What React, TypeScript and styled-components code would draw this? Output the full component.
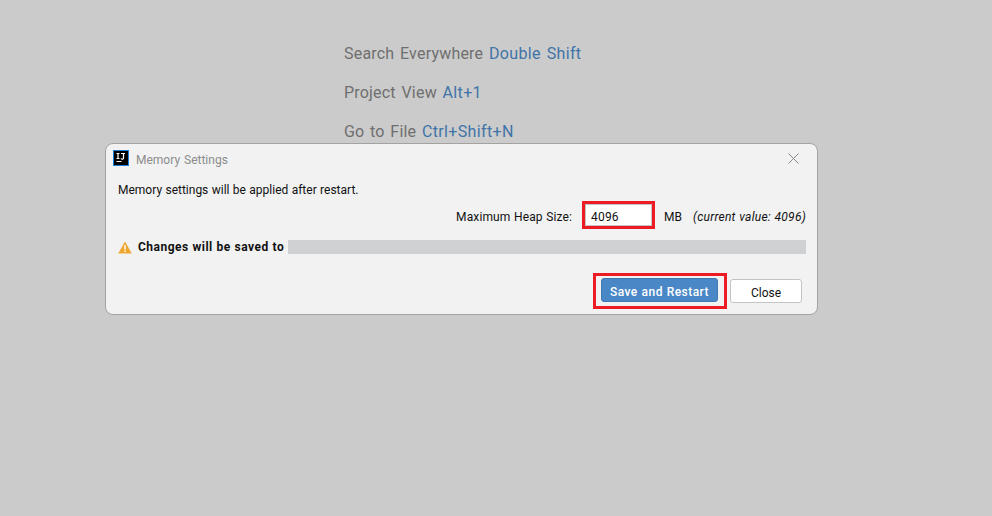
import React from "react";
import styled, { createGlobalStyle } from "styled-components";

const Global = createGlobalStyle`
  html, body { margin: 0; padding: 0; height: 100%; }
  body { background: #cbcbcb; font-family: Roboto, "Noto Sans", sans-serif; }
  #root { height: 100%; }
`;

const Page = styled.div`
  position: relative;
  width: 992px;
  height: 516px;
  overflow: hidden;
  background: #cbcbcb;
`;

const Hints = styled.div`
  display: flex;
  flex-direction: column;
  gap: 17px;
  padding: 43px 0 0 344px;
`;

const Hint = styled.div`
  font-size: 16px;
  line-height: 22px;
  color: #6f6f6f;
  white-space: nowrap;
  word-spacing: 1.5px;
  letter-spacing: 0.2px;
`;

const Key = styled.span`
  color: #3f74a8;
  letter-spacing: 0.35px;
`;

const Dialog = styled.div`
  position: absolute;
  left: 105px;
  top: 143px;
  width: 711px;
  height: 170px;
  background: #f2f2f2;
  border: 1px solid #a3a3a3;
  border-radius: 8px;
  color: #111;
  font-size: 12px;
  word-spacing: 0.4px;
  display: flex;
  flex-direction: column;
`;

const TitleBar = styled.div`
  display: flex;
  align-items: center;
  height: 30px;
  padding: 0 18px 2px 7px;
  box-sizing: border-box;
  gap: 7px;
`;

const Title = styled.div`
  flex: 1;
  color: #8c8c8c;
  font-size: 12px;
  word-spacing: 1px;
  padding-top: 4px;
`;

const Body = styled.div`
  display: flex;
  flex-direction: column;
  padding: 8px 11px 0 12px;
`;

const Message = styled.div`
  line-height: 17px;
`;

const HeapRow = styled.div`
  display: flex;
  align-items: center;
  justify-content: flex-end;
  height: 28px;
  margin-top: 2px;
`;

const HeapLabel = styled.span`
  margin-right: 10px;
  padding-top: 4px;
  letter-spacing: 0.13px;
`;

const Marked = styled.div`
  border: 3px solid #ed1c24;
  box-sizing: border-box;
`;

const HeapField = styled(Marked)`
  width: 73px;
  height: 28px;
  margin-right: 9px;
`;

const HeapInput = styled.div`
  box-sizing: border-box;
  height: 100%;
  border: 1px solid #c4c4c4;
  background: #fff;
  display: flex;
  align-items: center;
  padding: 3px 0 0 5px;
  letter-spacing: 0.2px;
`;

const Unit = styled.span`
  margin-right: 11px;
  padding-top: 4px;
`;

const Current = styled.span`
  font-style: italic;
  white-space: nowrap;
  letter-spacing: 0.25px;
  padding-top: 4px;
`;

const WarnRow = styled.div`
  display: flex;
  align-items: center;
  height: 14px;
  margin-top: 11px;
`;

const WarnText = styled.span`
  font-weight: 700;
  letter-spacing: 0.48px;
  margin: 0 4px 0 6px;
  white-space: nowrap;
`;

const Redacted = styled.div`
  flex: 1;
  height: 14px;
  background: #d0d1d3;
`;

const Footer = styled.div`
  display: flex;
  align-items: center;
  justify-content: flex-end;
  gap: 3px;
  padding: 19px 15px 0 0;
`;

const SaveFrame = styled(Marked)`
  width: 134px;
  height: 36px;
  padding: 2px 6px 4px 5px;
`;

const PrimaryButton = styled.button`
  width: 100%;
  height: 100%;
  border: 1px solid #3f7ab5;
  border-radius: 3px;
  background: #4a87c7;
  color: #fff;
  font: 500 12px Roboto, sans-serif;
  letter-spacing: 0.45px;
  word-spacing: 0.4px;
  padding: 3px 0 0;
`;

const CloseButton = styled.button`
  width: 72px;
  height: 24px;
  border: 1px solid #c4c4c4;
  border-radius: 3px;
  background: #fff;
  color: #111;
  font: 12px Roboto, sans-serif;
  padding: 3px 0 0;
`;

const IdeaLogo = () => (
  <svg width="16" height="16" viewBox="0 0 16 16">
    <rect width="16" height="16" fill="#1b7fe0" />
    <rect x="1" y="1" width="14" height="14" fill="#000" />
    <path d="M3.5 3.5h3M5 3.5v5M3.5 8.5h3M8 3.5h4M10.5 3.5v4.2a1 1 0 0 1-2.4.6" stroke="#fff" strokeWidth="1.2" fill="none" />
    <rect x="3.5" y="11" width="5" height="1" fill="#fff" />
  </svg>
);

const CloseIcon = () => (
  <svg width="11" height="11" viewBox="0 0 11 11">
    <path d="M0.5 0.5l10 10M10.5 0.5l-10 10" stroke="#8a8a8a" strokeWidth="1" fill="none" />
  </svg>
);

const WarnIcon = () => (
  <svg width="14" height="13" viewBox="0 0 14 13">
    <path d="M7 0.5L13.8 12.5H0.2z" fill="#f0a732" />
    <rect x="6.3" y="4" width="1.4" height="4.6" fill="#fff" />
    <rect x="6.3" y="9.6" width="1.4" height="1.4" fill="#fff" />
  </svg>
);

export default function App() {
  return (
    <Page>
      <Global />
      <Hints>
        <Hint>Search Everywhere <Key>Double Shift</Key></Hint>
        <Hint>Project View <Key>Alt+1</Key></Hint>
        <Hint>Go to File <Key>Ctrl+Shift+N</Key></Hint>
      </Hints>
      <Dialog>
        <TitleBar>
          <IdeaLogo />
          <Title>Memory Settings</Title>
          <CloseIcon />
        </TitleBar>
        <Body>
          <Message>Memory settings will be applied after restart.</Message>
          <HeapRow>
            <HeapLabel>Maximum Heap Size:</HeapLabel>
            <HeapField><HeapInput>4096</HeapInput></HeapField>
            <Unit>MB</Unit>
            <Current>(current value: 4096)</Current>
          </HeapRow>
          <WarnRow>
            <WarnIcon />
            <WarnText>Changes will be saved to</WarnText>
            <Redacted />
          </WarnRow>
        </Body>
        <Footer>
          <SaveFrame>
            <PrimaryButton>Save and Restart</PrimaryButton>
          </SaveFrame>
          <CloseButton>Close</CloseButton>
        </Footer>
      </Dialog>
    </Page>
  );
}
